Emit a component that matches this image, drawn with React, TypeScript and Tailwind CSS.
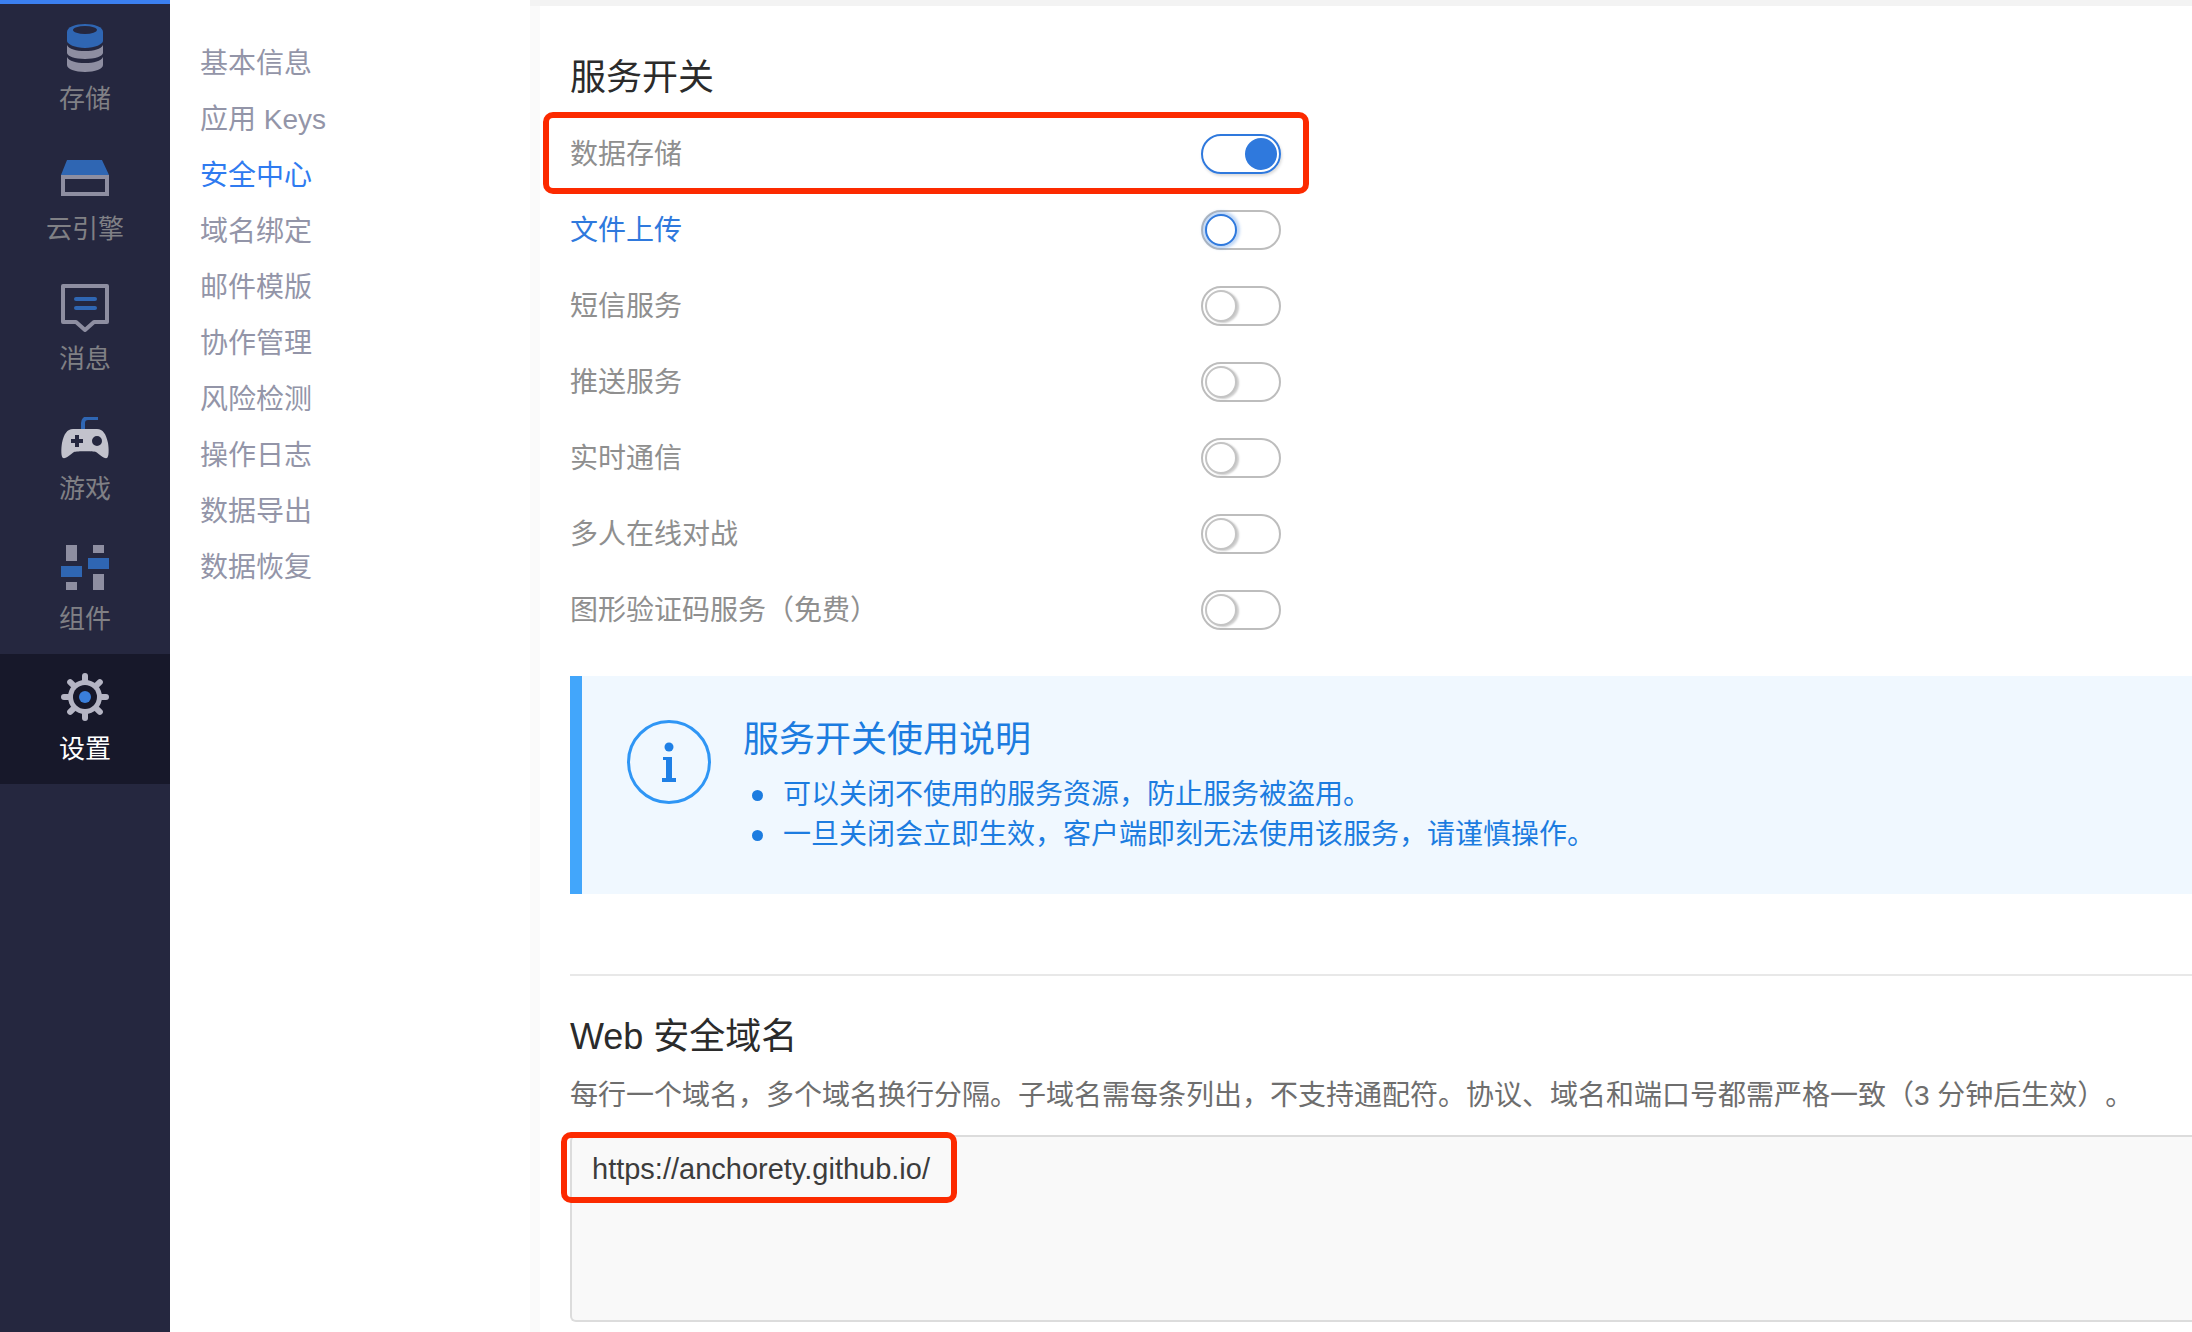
import React from "react";

function StorageIcon() {
  return (
    <svg width="36" height="48" viewBox="0 0 36 48">
      <path d="M0 17V8C0 3 8 0 18 0s18 3 18 8v9c0 3-8 7-18 7S0 20 0 17z" fill="#2f66b3" />
      <ellipse cx="18" cy="6" rx="12" ry="4" fill="#25273f" />
      <path d="M0 21c2 4 9 6 18 6s16-2 18-6v8c0 3-8 6-18 6S0 32 0 29z" fill="#8e8ea1" />
      <path d="M0 33c2 4 9 6 18 6s16-2 18-6v8c0 4-8 7-18 7S0 45 0 41z" fill="#8e8ea1" />
    </svg>
  );
}

function EngineIcon() {
  return (
    <svg width="48" height="36" viewBox="0 0 48 36">
      <path d="M6 0h35l7 15H0z" fill="#2f66b3" />
      <path d="M0 15h48v21H0zM4 19v13h40V19z" fill="#8e8ea1" fillRule="evenodd" />
    </svg>
  );
}

function MessageIcon() {
  return (
    <svg width="48" height="48" viewBox="0 0 48 48">
      <path d="M2 2h44v36H33l-9 8-9-8H2z" fill="none" stroke="#8e8ea1" strokeWidth="4" strokeLinejoin="round" />
      <rect x="13" y="13" width="23" height="4" rx="2" fill="#2f66b3" />
      <rect x="13" y="22" width="23" height="4" rx="2" fill="#2f66b3" />
    </svg>
  );
}

function GameIcon() {
  return (
    <svg width="48" height="42" viewBox="0 0 48 42">
      <path d="M22 13V6c0-3 2-5 5-5h10" fill="none" stroke="#2f66b3" strokeWidth="4" />
      <path
        d="M12 12h24c6 0 9 5 11 14 1 6 1 14-1 15-3 1-8-4-11-6-3-1-19-1-22 0-3 2-8 7-11 6-2-1-2-9-1-15C3 17 6 12 12 12zM10 22h4v-4h4v4h4v4h-4v4h-4v-4h-4zM36 19a5 5 0 1 0 0 10 5 5 0 0 0 0-10z"
        fill="#c2c2cc"
        fillRule="evenodd"
      />
    </svg>
  );
}

function ComponentIcon() {
  return (
    <svg width="48" height="46" viewBox="0 0 48 46">
      <rect x="5" y="0" width="11" height="16" fill="#8e8ea1" />
      <rect x="32" y="0" width="11" height="8" fill="#8e8ea1" />
      <rect x="27" y="13" width="21" height="11" fill="#2f66b3" />
      <rect x="0" y="21" width="21" height="11" fill="#2f66b3" />
      <rect x="5" y="37" width="11" height="8" fill="#8e8ea1" />
      <rect x="32" y="29" width="11" height="16" fill="#8e8ea1" />
    </svg>
  );
}

function GearIcon() {
  const teeth = [0, 45, 90, 135, 180, 225, 270, 315];
  return (
    <svg width="48" height="48" viewBox="0 0 48 48">
      {teeth.map((a) => (
        <rect key={a} x="21" y="0" width="6" height="10" rx="3" fill="#b5b5c4" transform={`rotate(${a} 24 24)`} />
      ))}
      <circle cx="24" cy="24" r="17" fill="#b5b5c4" />
      <circle cx="24" cy="24" r="12" fill="#17182a" />
      <circle cx="24" cy="24" r="6" fill="#3a7fdc" />
    </svg>
  );
}

const navItems = [
  { label: "存储", icon: <StorageIcon /> },
  { label: "云引擎", icon: <EngineIcon /> },
  { label: "消息", icon: <MessageIcon /> },
  { label: "游戏", icon: <GameIcon /> },
  { label: "组件", icon: <ComponentIcon /> },
  { label: "设置", icon: <GearIcon />, active: true },
];

const subItems = ["基本信息", "应用 Keys", "安全中心", "域名绑定", "邮件模版", "协作管理", "风险检测", "操作日志", "数据导出", "数据恢复"];

const services = [
  { label: "数据存储", state: "on" },
  { label: "文件上传", state: "focus" },
  { label: "短信服务", state: "off" },
  { label: "推送服务", state: "off" },
  { label: "实时通信", state: "off" },
  { label: "多人在线对战", state: "off" },
  { label: "图形验证码服务（免费）", state: "off" },
];

function Toggle({ state }: { state: string }) {
  if (state === "on") {
    return (
      <div className="flex h-[40px] w-[80px] items-center justify-end rounded-full border-2 border-[#2f79dd] pr-[2px] shadow-[1px_2px_3px_rgba(0,0,0,0.15)]">
        <div className="h-[32px] w-[32px] rounded-full bg-[#2f79dd]" />
      </div>
    );
  }
  if (state === "focus") {
    return (
      <div className="flex h-[40px] w-[80px] items-center rounded-full border-2 border-[#bdbdbd] pl-[2px]">
        <div className="h-[32px] w-[32px] rounded-full border-2 border-[#2f79dd] bg-white shadow-[0_0_3px_3px_rgba(47,121,221,0.3)]" />
      </div>
    );
  }
  return (
    <div className="flex h-[40px] w-[80px] items-center rounded-full border-2 border-[#bdbdbd] pl-[2px]">
      <div className="h-[32px] w-[32px] rounded-full border-2 border-[#c4c4c4] bg-white shadow-[2px_1px_2px_rgba(0,0,0,0.2)]" />
    </div>
  );
}

export default function App() {
  return (
    <div className="relative flex h-[1332px] w-[2192px] overflow-hidden bg-white font-['Liberation_Sans','Noto_Sans_CJK_SC',sans-serif]">
      {/* Left nav */}
      <div className="flex w-[170px] shrink-0 flex-col bg-[#25273f]">
        <div className="h-[4px] bg-[#3b7ff0]" />
        <div className="flex flex-col">
          {navItems.map((item) => (
            <div
              key={item.label}
              className={`flex h-[130px] flex-col items-center pt-[20px] ${item.active ? "bg-[#17182a]" : ""}`}
            >
              <div className={`flex h-[48px] items-center justify-center ${item.active ? "-mt-[1px] mb-[1px]" : ""}`}>{item.icon}</div>
              <div className={`mt-[10px] text-[26px] leading-[34px] ${item.active ? "text-white" : "text-[#808085]"}`}>
                {item.label}
              </div>
            </div>
          ))}
        </div>
      </div>

      {/* Second column */}
      <div className="w-[360px] shrink-0 pt-[6px]">
        <div className="flex flex-col pl-[30px] pt-[34px]">
          {subItems.map((s) => (
            <div key={s} className={`h-[56px] text-[28px] leading-[48px] ${s === "安全中心" ? "text-[#2f7bf0]" : "text-[#9395a8]"}`}>
              {s}
            </div>
          ))}
        </div>
      </div>

      {/* Main */}
      <div className="flex min-w-0 flex-1 flex-col">
        <div className="h-[6px] bg-[#f3f3f3]" />
        <div className="flex flex-1 flex-col border-l-[10px] border-[#fafafa] pl-[30px]">
          <h2 className="mt-[47px] text-[36px] font-normal leading-[50px] text-[#2b2b2b]">服务开关</h2>
          <div className="mt-[13px] w-[711px]">
            {services.map((s) => (
              <div key={s.label} className="flex h-[76px] items-center justify-between">
                <span className={`pt-[2px] text-[28px] [text-spacing-trim:space-all] ${s.state === "focus" ? "text-[#2f79dd]" : "text-[#8f8f8f]"}`}>{s.label}</span>
                <Toggle state={s.state} />
              </div>
            ))}
          </div>
          <div className="mt-[28px] flex h-[218px] border-l-[12px] border-[#42a6fb] bg-[#f0f8ff] pl-[45px] pt-[44px]">
            <svg width="84" height="84" viewBox="0 0 84 84" className="shrink-0">
              <circle cx="42" cy="42" r="40.5" fill="none" stroke="#2f96f5" strokeWidth="3" />
              <circle cx="42" cy="27" r="4.5" fill="#1f80e6" />
              <path d="M36 37h9v21h4v4H35v-4h4V40h-3z" fill="#1f80e6" />
            </svg>
            <div className="ml-[32px] text-[#1c7ce0]">
              <div className="text-[36px] leading-[40px]">服务开关使用说明</div>
              <ul className="mt-[15px] text-[28px] leading-[40px]">
                <li className="flex items-center">
                  <span className="ml-[9px] mr-[20px] h-[11px] w-[11px] rounded-full bg-[#1c7ce0]" />
                  可以关闭不使用的服务资源，防止服务被盗用。
                </li>
                <li className="flex items-center">
                  <span className="ml-[9px] mr-[20px] h-[11px] w-[11px] rounded-full bg-[#1c7ce0]" />
                  一旦关闭会立即生效，客户端即刻无法使用该服务，请谨慎操作。
                </li>
              </ul>
            </div>
          </div>
          <div className="mt-[80px] h-[2px] bg-[#e8e8e8]" />
          <h2 className="mt-[36px] text-[36px] font-normal leading-[50px] text-[#2b2b2b]">Web 安全域名</h2>
          <p className="mt-[14px] whitespace-nowrap text-[28px] leading-[40px] text-[#6e6e6e] [text-spacing-trim:space-all]">
            每行一个域名，多个域名换行分隔。子域名需每条列出，不支持通配符。协议、域名和端口号都需严格一致（3 分钟后生效）。
          </p>
          <div className="mt-[19px] h-[187px] rounded-l-[6px] border-2 border-r-0 border-[#dcdcdc] bg-[#f9f9f9] pl-[20px] pt-[12px] text-[29px] leading-[40px] text-[#3c3c3c]">
            https://anchorety.github.io/
          </div>
        </div>
      </div>

      {/* annotation boxes */}
      <div className="absolute left-[543px] top-[112px] h-[82px] w-[766px] rounded-[10px] border-[6px] border-[#fc2a00]" />
      <div className="absolute left-[561px] top-[1132px] h-[71px] w-[396px] rounded-[10px] border-[6px] border-[#fc2a00]" />
    </div>
  );
}
